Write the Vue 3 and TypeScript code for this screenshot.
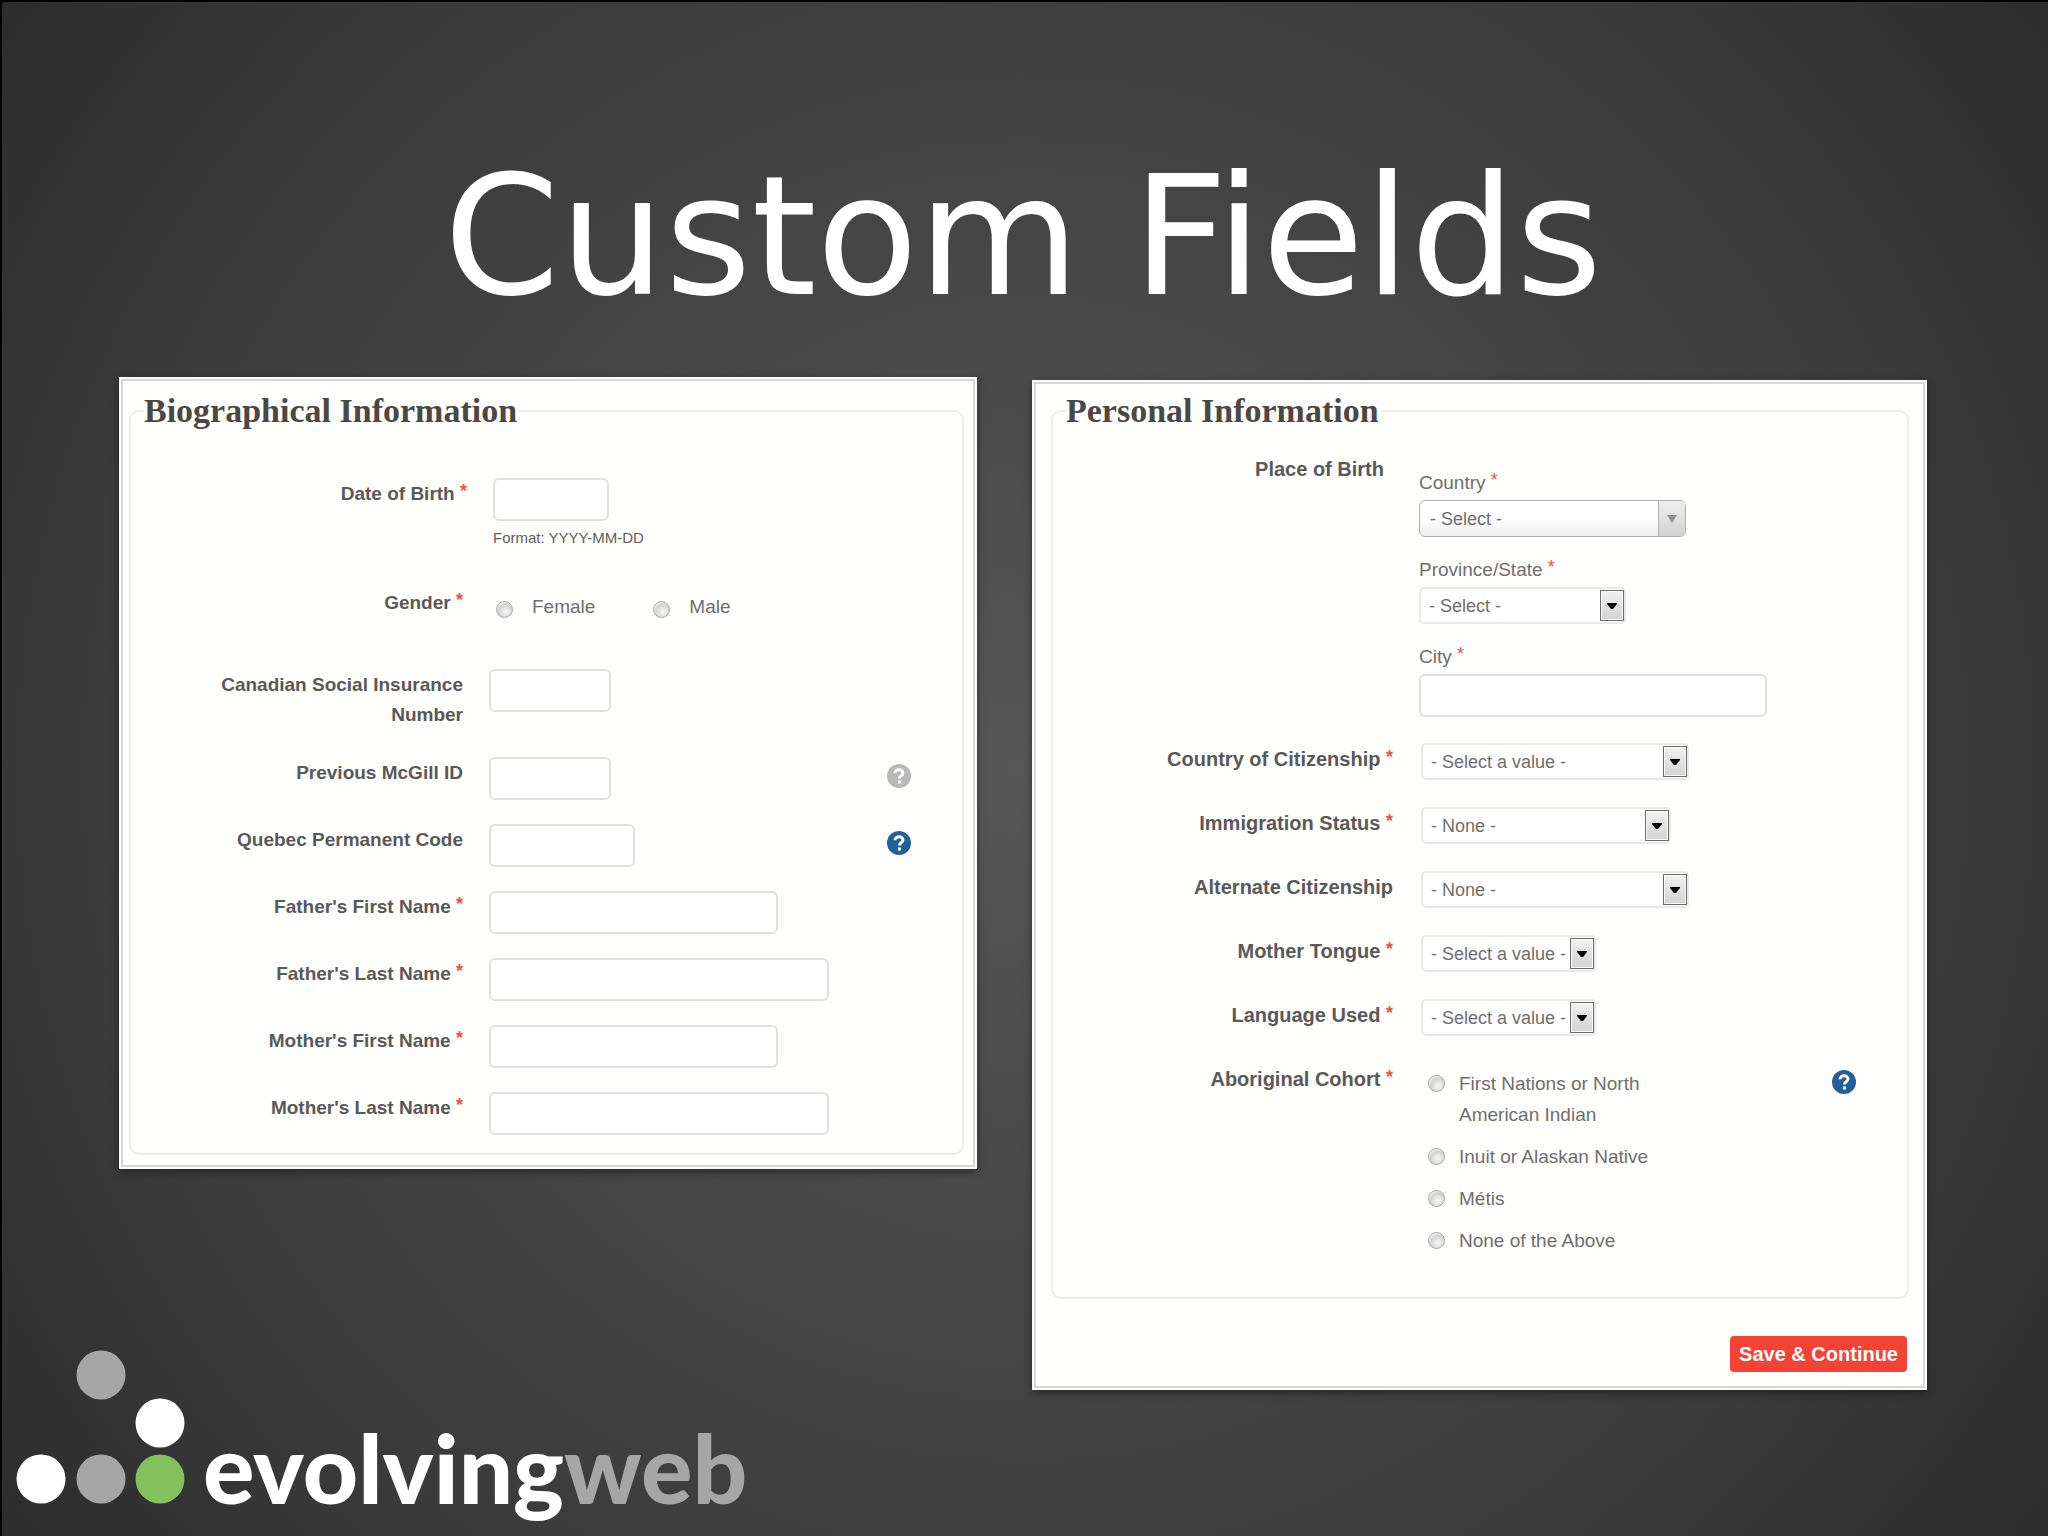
<script setup lang="ts">
import { ref } from 'vue'

interface TextField {
  id: string
  label: string
  required: boolean
  width: number
  help?: 'muted' | 'active'
}

interface SelectField {
  id: string
  label: string
  required: boolean
  width: number
  placeholder: string
}

const bioFields: TextField[] = [
  { id: 'mcgill-id', label: 'Previous McGill ID', required: false, width: 122, help: 'muted' },
  { id: 'permanent-code', label: 'Quebec Permanent Code', required: false, width: 146, help: 'active' },
  { id: 'father-first', label: "Father's First Name", required: true, width: 289 },
  { id: 'father-last', label: "Father's Last Name", required: true, width: 340 },
  { id: 'mother-first', label: "Mother's First Name", required: true, width: 289 },
  { id: 'mother-last', label: "Mother's Last Name", required: true, width: 340 },
]

const statusFields: SelectField[] = [
  { id: 'citizenship', label: 'Country of Citizenship', required: true, width: 268, placeholder: '- Select a value -' },
  { id: 'immigration', label: 'Immigration Status', required: true, width: 250, placeholder: '- None -' },
  { id: 'alt-citizenship', label: 'Alternate Citizenship', required: false, width: 268, placeholder: '- None -' },
  { id: 'mother-tongue', label: 'Mother Tongue', required: true, width: 175, placeholder: '- Select a value -' },
  { id: 'language-used', label: 'Language Used', required: true, width: 175, placeholder: '- Select a value -' },
]

const genders = ['Female', 'Male']
const cohorts = ['First Nations or North American Indian', 'Inuit or Alaskan Native', 'Métis', 'None of the Above']

const gender = ref('')
const cohort = ref('')
</script>

<template>
  <main class="slide">
    <h1 class="title">Custom Fields</h1>
    <div class="board">
      <div class="left">
        <form class="panel bio" @submit.prevent>
          <fieldset class="group">
            <legend>Biographical Information</legend>

            <div class="row birth">
              <label class="label" for="dob">Date of Birth <span class="req">*</span></label>
              <div class="field">
                <input id="dob" class="text" type="text" :style="{ width: '116px' }" />
                <p class="hint">Format: YYYY-MM-DD</p>
              </div>
            </div>

            <div class="row gender" role="radiogroup" aria-labelledby="gender-label">
              <span id="gender-label" class="label">Gender <span class="req">*</span></span>
              <div class="choices inline">
                <label v-for="g in genders" :key="g" class="choice">
                  <input v-model="gender" type="radio" name="gender" :value="g" />
                  <span>{{ g }}</span>
                </label>
              </div>
            </div>

            <div class="row insurance">
              <label class="label" for="sin">Canadian Social Insurance Number</label>
              <div class="field">
                <input id="sin" class="text" type="text" :style="{ width: '122px' }" />
              </div>
            </div>

            <div v-for="f in bioFields" :key="f.id" class="row">
              <label class="label" :for="f.id">{{ f.label }}<template v-if="f.required">&nbsp;<span class="req">*</span></template></label>
              <div class="field">
                <input :id="f.id" class="text" type="text" :style="{ width: f.width + 'px' }" />
              </div>
              <button v-if="f.help" type="button" class="help" :class="f.help" :aria-label="'Help: ' + f.label">
                <svg viewBox="0 0 24 24" width="24" height="24">
                  <circle cx="12" cy="12" r="12" />
                  <path d="M8 9.2C8 4.6 16 4.8 16 9c0 2.600-3.600 2.800-3.600 5.600" />
                  <rect x="11" y="16.500" width="3" height="3" />
                </svg>
              </button>
            </div>
          </fieldset>
        </form>

        <div class="logo">
          <svg class="dots" viewBox="0 0 169 154" width="169" height="154" aria-hidden="true">
            <circle cx="25" cy="129" r="24.500" fill="#fff" />
            <circle cx="85" cy="129" r="24.500" fill="#a7a6a7" />
            <circle cx="144" cy="129" r="24.500" fill="#82c15c" />
            <circle cx="144" cy="73" r="24.500" fill="#fff" />
            <circle cx="85" cy="25" r="24.500" fill="#a7a6a7" />
          </svg>
          <span class="wordmark">evolving<span class="web">web</span></span>
        </div>
      </div>

      <form class="panel personal" @submit.prevent>
        <fieldset class="group">
          <legend>Personal Information</legend>

          <div class="row place">
            <span class="label">Place of Birth</span>
            <div class="stack">
              <div class="item">
                <label for="country">Country <span class="req">*</span></label>
                <span class="select fancy" :style="{ width: '267px' }">
                  <select id="country"><option>- Select -</option></select>
                  <span class="arrow"><svg viewBox="0 0 10 8" width="10" height="8"><path d="M0 0h10L5 8z" /></svg></span>
                </span>
              </div>
              <div class="item">
                <label for="province">Province/State <span class="req">*</span></label>
                <span class="select" :style="{ width: '207px' }">
                  <select id="province"><option>- Select -</option></select>
                  <span class="arrow"><svg viewBox="0 0 10 6" width="10" height="6"><path d="M0 0h10v1L6 6H4L0 1z" /></svg></span>
                </span>
              </div>
              <div class="item">
                <label for="city">City <span class="req">*</span></label>
                <input id="city" class="text" type="text" :style="{ width: '348px' }" />
              </div>
            </div>
          </div>

          <div v-for="f in statusFields" :key="f.id" class="row">
            <label class="label" :for="f.id">{{ f.label }}<template v-if="f.required">&nbsp;<span class="req">*</span></template></label>
            <span class="select" :style="{ width: f.width + 'px' }">
              <select :id="f.id"><option>{{ f.placeholder }}</option></select>
              <span class="arrow"><svg viewBox="0 0 10 6" width="10" height="6"><path d="M0 0h10v1L6 6H4L0 1z" /></svg></span>
            </span>
          </div>

          <div class="row" role="radiogroup" aria-labelledby="cohort-label">
            <span id="cohort-label" class="label">Aboriginal Cohort <span class="req">*</span></span>
            <div class="choices">
              <label v-for="c in cohorts" :key="c" class="choice">
                <input v-model="cohort" type="radio" name="cohort" :value="c" />
                <span>{{ c }}</span>
              </label>
            </div>
            <button type="button" class="help active" aria-label="Help: Aboriginal Cohort">
              <svg viewBox="0 0 24 24" width="24" height="24">
                <circle cx="12" cy="12" r="12" />
                <path d="M8 9.2C8 4.6 16 4.8 16 9c0 2.600-3.600 2.800-3.600 5.600" />
                <rect x="11" y="16.500" width="3" height="3" />
              </svg>
            </button>
          </div>
        </fieldset>
        <div class="actions">
          <button type="submit" class="save">Save &amp; Continue</button>
        </div>
      </form>
    </div>
  </main>
</template>

<style>
body {
  background: #2c2c2c;
}
</style>

<style scoped>
.slide {
  box-sizing: border-box;
  min-height: 100vh;
  display: flex;
  flex-direction: column;
  padding: 135px 121px 22px 117px;
  border-top: 2px solid #000;
  border-left: 2px solid #000;
  background: radial-gradient(circle farthest-corner at 50% 50%, #575757 0%, #494949 33%, #3a3a3a 75%, #2c2c2c 100%);
  font-family: "Liberation Sans", Arial, sans-serif;
  font-size: 19px;
  line-height: 30px;
  color: #6e6e6e;
}

.title {
  margin: 0 0 40px;
  font: 400 166px/200px "DejaVu Sans", sans-serif;
  text-align: center;
  color: #fff;
}

.board {
  flex: 1;
  display: grid;
  grid-template-columns: minmax(0, 858fr) minmax(0, 895fr);
  column-gap: 55px;
}

.left {
  display: flex;
  flex-direction: column;
  justify-content: space-between;
}

.panel {
  background: #fefefc;
  border: 2px solid #fafafa;
  box-shadow: inset 0 0 0 2px #d8d8d8, 0 3px 8px rgba(0, 0, 0, 0.4);
}

.bio {
  padding: 15px 11px 12px 8px;
}

.personal {
  align-self: start;
  margin-top: 3px;
  padding: 12px 16px 16px 17px;
}

.group {
  min-width: 0;
  margin: 0;
  border: 2px solid #ececec;
  border-radius: 10px;
  display: flow-root;
}

.bio .group {
  padding: 50px 0 18px;
}

.personal .group {
  padding: 25px 0 41px;
}

legend {
  margin-left: 13px;
  padding: 0 2px 0 0;
  font: 700 34px/34px "Liberation Serif", Georgia, serif;
  color: #4a4845;
}

.row {
  display: grid;
  grid-template-columns: 332px minmax(0, 1fr) 24px;
  column-gap: 26px;
  align-items: start;
  padding-right: 51px;
  margin-bottom: 24px;
}

.personal .row {
  grid-template-columns: 340px minmax(0, 1fr) 24px;
  column-gap: 28px;
  margin-bottom: 27px;
}

.row:last-child,
.personal .row:last-child {
  margin-bottom: 0;
}

.birth {
  margin-left: 4px;
  margin-bottom: 36px;
}

.gender {
  margin-bottom: 47px;
}

.insurance {
  margin-bottom: 27px;
}

.insurance .label {
  padding-left: 80px;
}

.label {
  padding-top: 1px;
  font-weight: 700;
  text-align: right;
  color: #595959;
}

.personal .label {
  font-size: 20px;
}

.personal .place {
  margin-left: -2px;
  margin-bottom: 26px;
}

.place .label {
  padding-right: 7px;
}

.req {
  font-size: 18px;
  line-height: 0;
  vertical-align: 3px;
  color: #f4503f;
}

.field {
  display: flex;
  flex-direction: column;
  align-items: flex-start;
}

.text {
  box-sizing: border-box;
  display: block;
  height: 43px;
  margin: 0;
  padding: 0 10px;
  border: 2px solid #e2e0df;
  border-radius: 6px;
  background: #fff;
  font: inherit;
  color: #555;
}

.hint {
  margin: 5px 0 1px;
  font-size: 15px;
  line-height: 24px;
  color: #606060;
}

.choices {
  display: flex;
  flex-direction: column;
  gap: 11px;
  padding-top: 5px;
  line-height: 31px;
}

.choices.inline {
  flex-direction: row;
  gap: 51px;
  line-height: 30px;
}

.choice {
  display: flex;
  align-items: flex-start;
  gap: 14px;
  max-width: 240px;
}

.inline .choice {
  gap: 19px;
}

.choice input {
  appearance: none;
  flex: none;
  width: 17px;
  height: 17px;
  margin: 7px 0 0 7px;
  border: 1px solid #a6a6a6;
  border-radius: 50%;
  background: radial-gradient(circle at 60% 65%, #f2f2f2 10%, #d2d2d2 55%, #f4f4f4 75%);
}

.inline .choice input {
  margin-top: 9px;
}

.choice input:checked {
  background: radial-gradient(circle, #444 35%, #eee 40%);
}

.stack {
  display: flex;
  flex-direction: column;
  gap: 18px;
  padding-top: 15px;
}

.item {
  display: flex;
  flex-direction: column;
  align-items: flex-start;
  gap: 2px;
}

.select {
  display: grid;
  max-width: 100%;
  height: 37px;
}

.select select,
.select .arrow {
  grid-area: 1 / 1;
}

.select select {
  appearance: none;
  box-sizing: border-box;
  width: 100%;
  height: 37px;
  margin: 0;
  padding: 0 0 0 8px;
  border: 2px solid #eae8e8;
  border-radius: 5px;
  background: #fff;
  font: 18px "Liberation Sans", Arial, sans-serif;
  color: #6e6e6e;
}

.arrow {
  box-sizing: border-box;
  justify-self: end;
  display: grid;
  place-items: center;
  width: 24px;
  height: 31px;
  margin: 3px 2px 0 0;
  border: 1px solid #6d6d6d;
  box-shadow: inset 0 0 0 1px #fafafa;
  background: linear-gradient(#f1f1f1, #d3d3d3);
  pointer-events: none;
}

.select.fancy select {
  padding-left: 10px;
  border: 1px solid #b0b0b0;
  border-radius: 6px;
  background: linear-gradient(#fff 50%, #efedee);
}

.fancy .arrow {
  width: 27px;
  height: 35px;
  margin: 1px 1px 0 0;
  border: 0;
  border-left: 1px solid #b0b0b0;
  border-radius: 0 5px 5px 0;
  box-shadow: none;
  background: linear-gradient(#efefef, #d2d2d2);
  fill: #909090;
}

.help {
  width: 24px;
  height: 24px;
  margin-top: 7px;
  padding: 0;
  border: 0;
  background: none;
  color: #b9b9b9;
}

.help.active {
  color: #23609b;
}

.help svg {
  display: block;
}

.help circle {
  fill: currentColor;
}

.help path {
  fill: none;
  stroke: #fff;
  stroke-width: 3;
}

.help rect {
  fill: #fff;
}

.actions {
  display: flex;
  justify-content: flex-end;
  margin-top: 37px;
}

.save {
  height: 36px;
  margin-right: 2px;
  padding: 0 9px;
  border: 0;
  border-radius: 4px;
  background: #f44336;
  font: 700 20px "Liberation Sans", Arial, sans-serif;
  color: #fff;
}

.logo {
  display: flex;
  align-items: baseline;
  gap: 18px;
  margin-left: -103px;
}

.dots {
  flex: none;
  margin-bottom: -2px;
}

.wordmark {
  font: 900 96px/94px Lato, sans-serif;
  color: #fff;
}

.web {
  color: #a7a6a7;
}
</style>
